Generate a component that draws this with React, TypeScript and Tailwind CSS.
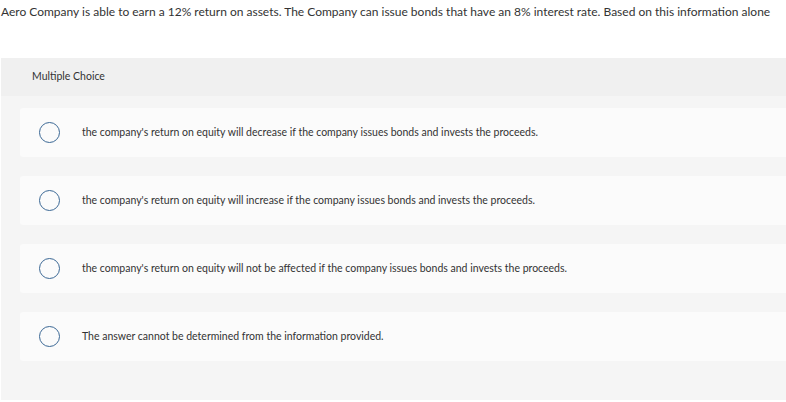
const options = [
  "the company's return on equity will decrease if the company issues bonds and invests the proceeds.",
  "the company's return on equity will increase if the company issues bonds and invests the proceeds.",
  "the company's return on equity will not be affected if the company issues bonds and invests the proceeds.",
  "The answer cannot be determined from the information provided.",
];

export default function App() {
  return (
    <div className="min-h-screen w-[786px] overflow-hidden bg-white">
      {/* Question stem */}
      <p className="px-px pt-[5px] text-[12px] leading-[14px] text-[#333] [font-family:Lato,'Liberation_Sans',sans-serif]">
        Aero Company is able to earn a 12% return on assets. The Company can issue bonds that have an 8% interest rate. Based on this information alone
      </p>

      {/* Answer panel */}
      <div className="mt-[39px] ml-px h-[342px] bg-[#f5f5f5]">
        <div className="flex h-[38px] items-center bg-[#f0f0f0] pl-[31px] text-[10.5px] text-[#333] [font-family:Lato,'Liberation_Sans',sans-serif]">
          Multiple Choice
        </div>

        <div className="flex flex-col gap-[19px] pt-[12px] pl-[19px]">
          {options.map((text) => (
            <div
              key={text}
              className="flex h-[49px] items-center rounded-l-[3px] bg-[#fbfbfb]"
            >
              <span className="ml-[19px] h-[21px] w-[21px] shrink-0 rounded-full border-[1.5px] border-[#3b6895]" />
              <span className="ml-[22px] text-[10.5px] text-[#333] [font-family:Lato,'Liberation_Sans',sans-serif]">
                {text}
              </span>
            </div>
          ))}
        </div>
      </div>
    </div>
  );
}
